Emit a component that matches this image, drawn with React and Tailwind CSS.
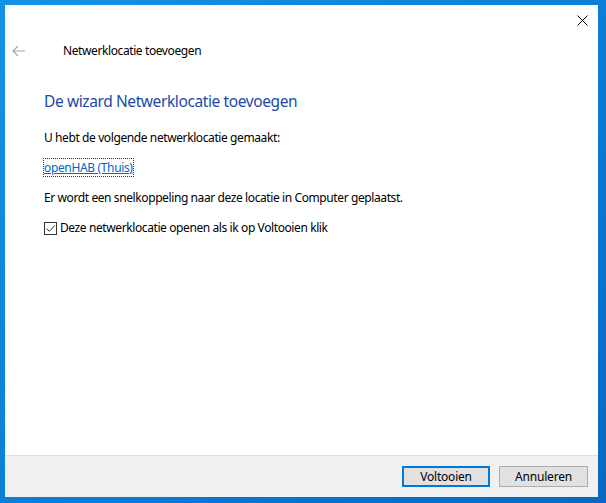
import React from "react";

export default function App() {
  const font = { fontFamily: '"Segoe UI", "Noto Sans", "Open Sans", sans-serif' };
  return (
    <div
      className="w-[606px] h-[503px] bg-gradient-to-br from-[#1592e6] via-[#0a7fd8] to-[#0868c4] pt-[5px] pl-[5px] pr-[8px] pb-[6px] overflow-hidden"
      style={font}
    >
      <div className="w-full h-full bg-white flex flex-col text-[12px] text-black">
        <div className="h-[30px] flex items-center justify-end pr-[10px] shrink-0">
          <svg width="11" height="11" viewBox="0 0 11 11" className="mt-[1px]">
            <path d="M0.5 0.5 L10.5 10.5 M10.5 0.5 L0.5 10.5" stroke="#000" strokeWidth="1" fill="none" />
          </svg>
        </div>
        <div className="h-[32px] flex items-center shrink-0">
          <svg width="14" height="12" viewBox="0 0 14 12" className="ml-[7px]">
            <path d="M1 6 H13 M6 1 L1 6 L6 11" stroke="#a8a8a8" strokeWidth="1.2" fill="none" />
          </svg>
          <span className="ml-[37px] tracking-[-0.4px]">Netwerklocatie toevoegen</span>
        </div>
        <div className="flex-1 pl-[39px] flex flex-col">
          <div className="mt-[24px] text-[15.5px] leading-[20px] text-[#1c4aa8] tracking-[-0.4px]">
            De wizard Netwerklocatie toevoegen
          </div>
          <div className="mt-[19px] leading-[16px] tracking-[-0.4px]">
            U hebt de volgende netwerklocatie gemaakt:
          </div>
          <div className="mt-[14px] leading-[16px]">
            <span className="text-[#0066cc] underline outline outline-1 outline-dotted outline-[#333] tracking-[-0.35px]">
              openHAB (Thuis)
            </span>
          </div>
          <div className="mt-[14px] leading-[16px] tracking-[-0.4px]">
            Er wordt een snelkoppeling naar deze locatie in Computer geplaatst.
          </div>
          <div className="mt-[14px] flex items-center leading-[16px]">
            <span className="w-[13px] h-[13px] border border-[#333] flex items-center justify-center bg-white">
              <svg width="11" height="11" viewBox="0 0 11 11">
                <path d="M1.5 5.5 L4.3 8.3 L9.8 2.5" stroke="#333" strokeWidth="1" fill="none" />
              </svg>
            </span>
            <span className="ml-[3px] tracking-[-0.4px]">Deze netwerklocatie openen als ik op Voltooien klik</span>
          </div>
        </div>
        <div className="h-[42px] shrink-0 bg-[#f0f0f0] border-t border-[#dfdfdf] flex items-center justify-end pr-[10px] gap-[9px]">
          <button className="w-[88px] h-[21px] bg-[#e1e1e1] border-2 border-[#0078d7] text-[12px] leading-none flex items-center justify-center tracking-[-0.2px]">
            Voltooien
          </button>
          <button className="w-[89px] h-[21px] bg-[#e1e1e1] border border-[#adadad] text-[12px] leading-none flex items-center justify-center tracking-[-0.2px]">
            Annuleren
          </button>
        </div>
      </div>
    </div>
  );
}
